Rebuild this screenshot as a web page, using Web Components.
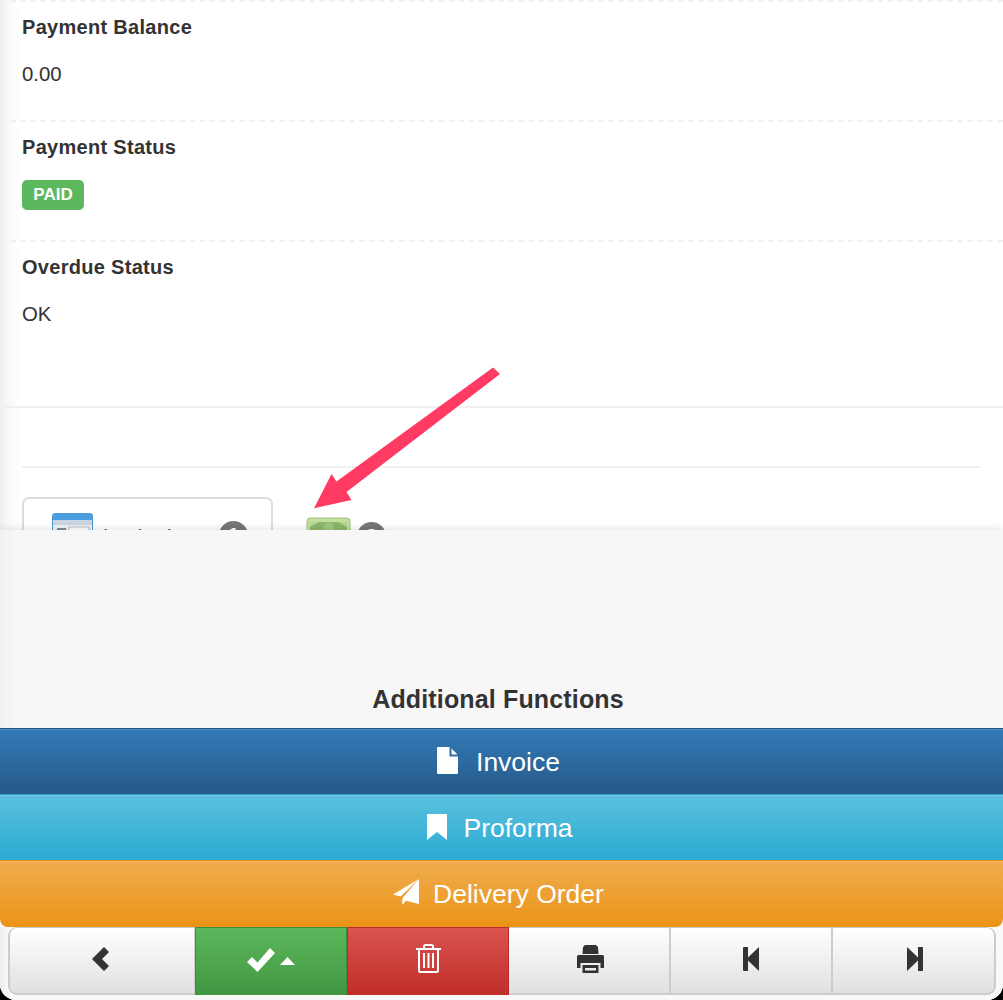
<!DOCTYPE html>
<html lang="en"><head><meta charset="utf-8"><title>Invoice</title>
<style>
html,body{margin:0;padding:0;background:#000;overflow:hidden}
body{font-family:"Liberation Sans",Arial,sans-serif;color:#333}
</style></head><body>
<app-shell>
  <info-row label="Payment Balance">0.00</info-row>
  <info-row label="Payment Status"><status-label>PAID</status-label></info-row>
  <info-row label="Overdue Status">OK</info-row>
  <tab-strip slot="tabs">
    <tab-item active count="1" label="Invoice Items">
      <svg slot="icon" width="41" height="44" viewBox="0 0 41 44"><rect x=".5" y=".5" width="40" height="42" rx="2" fill="#eef3f8" stroke="#4a97d2"/><rect x="1" y="1" width="39" height="6" fill="#4a9ede"/><rect x="1" y="7" width="39" height="5" fill="#c9d5e0"/><rect x="5" y="15" width="9" height="2" fill="#888"/><rect x="5" y="19" width="9" height="2" fill="#aaa"/><rect x="17" y="14" width="20" height="20" fill="#fff" stroke="#bbb"/></svg>
    </tab-item>
    <tab-item count="2">
      <svg slot="icon" width="45" height="40" viewBox="0 0 45 40"><rect x="1" y="1" width="43" height="38" rx="3" fill="#c3dfa0" stroke="#9cc07c"/><rect x="4" y="5" width="37" height="31" fill="#8db868"/><ellipse cx="22.500" cy="14" rx="6" ry="8" fill="#a0c67e"/><path d="M4 5h9L4 10ZM41 5h-9l9 5Z" fill="#b6d695"/></svg>
    </tab-item>
  </tab-strip>
  <bottom-panel slot="panel" heading="Additional Functions">
    <action-button tone="primary" label="Invoice" gap="18">
      <svg slot="icon" width="21" height="27" viewBox="0 0 21 27"><path fill="#fff" d="M1 0H12.500V9.500H21V26a1 1 0 0 1-1 1H1a1 1 0 0 1-1-1V1a1 1 0 0 1 1-1Z"/><path fill="#fff" d="M14.500 1.500 20.500 7.500H14.500Z"/></svg>
    </action-button>
    <action-button tone="info" label="Proforma" gap="17">
      <svg slot="icon" width="20" height="26" viewBox="0 0 20 26"><path fill="#fff" d="M0 0H20V26L10 18 0 26Z"/></svg>
    </action-button>
    <action-button tone="warning" label="Delivery Order" gap="14">
      <svg slot="icon" width="26" height="26" viewBox="0 0 26 26"><path fill="#fff" d="M26 0 0 15.500 7.500 17.500Z"/><path fill="#fff" d="M26 0 9.500 19 9 26 13 21.800 26 25Z"/></svg>
    </action-button>
    <tool-bar slot="toolbar">
      <tool-button style="width:187px;padding:0 4px 3px 0" tone="plain" first>
        <svg width="17" height="24" viewBox="0 0 17 24"><path fill="#333" d="M12 0 17 5 10 12 17 19 12 24 0 12Z"/></svg>
      </tool-button>
      <tool-button style="width:152px" tone="success">
        <svg width="28" height="24" viewBox="0 0 28 24"><path fill="#fff" d="M0 14 5 9 10.500 14.500 23 0 28 5 10.500 24Z"/></svg>
        <svg style="margin-left:5px;margin-top:2px" width="15" height="8" viewBox="0 0 15 8"><path fill="#fff" d="M7.500 0 15 8H0Z"/></svg>
      </tool-button>
      <tool-button style="width:162px;padding-bottom:7px" tone="danger">
        <svg width="25" height="29" viewBox="0 0 25 29"><path fill="none" stroke="#fff" stroke-width="2" d="M0 5H25M8 5V2.500Q8 1 9.500 1H15.500Q17 1 17 2.500V5M3 5.500V26.500Q3 28 4.500 28H20.500Q22 28 22 26.500V5.500M8 9V24M12.500 9V24M17 9V24"/></svg>
      </tool-button>
      <tool-button style="width:162px;padding-bottom:4px;padding-left:2px" tone="plain">
        <svg width="27" height="28" viewBox="0 0 27 28"><path fill="#333" fill-rule="evenodd" d="M8 0H19L21 2 21.500 9H5.500L6 2ZM1.500 10H25.500A1.500 1.500 0 0 1 27 11.500V23H23.500V18H3.500V23H0V11.500A1.500 1.500 0 0 1 1.500 10ZM5.500 20H21.500V28H5.500ZM8 23V25.500H19V23Z"/></svg>
      </tool-button>
      <tool-button style="width:162px;padding-bottom:3px" tone="plain">
        <svg width="16" height="24" viewBox="0 0 16 24"><path fill="#333" d="M1 0H5V10.500L16 0V24L5 13.500V24H1A1 1 0 0 1 0 23V1A1 1 0 0 1 1 0Z"/></svg>
      </tool-button>
      <tool-button style="flex:1;padding:0 0 3px 3px" tone="plain" final>
        <svg width="16" height="24" viewBox="0 0 16 24"><path fill="#333" d="M15 0H11V10.500L0 0V24L11 13.500V24H15A1 1 0 0 0 16 23V1A1 1 0 0 0 15 0Z"/></svg>
      </tool-button>
    </tool-bar>
  </bottom-panel>
  <svg slot="overlay" width="1003" height="1000" viewBox="0 0 1003 1000"><polygon fill="#ff3b63" points="493,367.500 500,374 346.500,492 351.500,500 314,508.300 331.500,474 336.500,481.500"/></svg>
</app-shell>
<script>
function def(name,css,html,init){
  customElements.define(name,class extends HTMLElement{
    constructor(){super();this.attachShadow({mode:'open'}).innerHTML='<style>'+css+'</style>'+html;}
    connectedCallback(){if(init)init(this,this.shadowRoot);}
  });
}
def('app-shell',`
  :host{display:block;width:1003px;height:1000px;position:relative;overflow:hidden;background:#000}
  .page{height:1000px;border-radius:0 0 16px 16px;overflow:hidden;display:flex;flex-direction:column;background:linear-gradient(to right,#eeeeee,#f6f6f6 6px,#fcfcfc 14px,#fff 22px)}
  .top{height:530px;overflow:hidden;flex:none}
  .hr1{height:2px;background:#f0f0f0;margin-top:46px}
  .hr2{height:2px;background:#f0f0f0;margin:58px 22px 0}
  .overlay{position:absolute;left:0;top:0;pointer-events:none}
  ::slotted(svg){display:block}
`,`<div class="page"><div class="top"><slot></slot><div class="hr1"></div><div class="hr2"></div><slot name="tabs"></slot></div><slot name="panel"></slot></div><div class="overlay"><slot name="overlay"></slot></div>`);
def('info-row',`
  :host{display:block;height:120px;box-sizing:border-box;border-top:2px dashed #f1f1f1;padding:15px 22px 0;font-size:20.4px;line-height:22px;color:#333}
  .l{font-size:20px;letter-spacing:.3px;font-weight:700;margin-bottom:25px;margin-top:-1px}
`,`<div class="l"></div><div><slot></slot></div>`,(h,s)=>{s.querySelector('.l').textContent=h.getAttribute('label')});
def('status-label',`
  :host{display:inline-flex;align-items:center;justify-content:center;width:62px;height:30px;margin-top:-3px;box-sizing:border-box;background:#5cb85c;color:#fff;border-radius:5px;font-weight:700;font-size:17px;vertical-align:top}
`,`<slot></slot>`);
def('tab-strip',`
  :host{display:flex;align-items:flex-start;padding:29px 22px 0}
`,`<slot></slot>`);
def('tab-item',`
  :host{display:flex;align-items:flex-start;box-sizing:border-box;font-size:18.500px;color:#333}
  :host([active]){width:251px;height:90px;border:2px solid #ddd;border-radius:7px;padding:14px 0 0 28px;margin-right:33px}
  :host(:not([active])){padding-top:20px}
  .t{margin:1px 9px 0 10px;line-height:44px;white-space:nowrap;width:107px}
  :host(:not([active])) .t{display:none}
  :host(:not([active])) .b{margin-left:6px;margin-top:5px}
  .b{width:29px;height:29px;margin-top:8px;border-radius:50%;background:#777;color:#fff;font-size:20px;font-weight:700;display:flex;align-items:center;justify-content:center;flex:none}
  ::slotted(svg){display:block;flex:none}
`,`<slot name="icon"></slot><span class="t"></span><span class="b"></span>`,(h,s)=>{s.querySelector('.t').textContent=h.getAttribute('label')||'';s.querySelector('.b').textContent=h.getAttribute('count')});
def('bottom-panel',`
  :host{display:flex;flex-direction:column;flex:1;min-height:0;position:relative;background:#f7f7f7;box-shadow:0 -2px 7px rgba(0,0,0,.1)}
  .head{height:198px;box-sizing:border-box;display:flex;align-items:flex-end;justify-content:center;padding:0 7px 14px 0;background:linear-gradient(to right,#f1f1f1,#f7f7f7 16px);font-size:25px;letter-spacing:.15px;line-height:30px;font-weight:700;color:#333}
  .foot{flex:1;background:linear-gradient(to right,#ededed,#f9f9f9 8px)}
`,`<div class="head"></div><slot></slot><div class="foot"><slot name="toolbar"></slot></div>`,(h,s)=>{s.querySelector('.head').textContent=h.getAttribute('heading')});
def('action-button',`
  :host{display:flex;align-items:center;justify-content:center;height:66px;box-sizing:border-box;color:#fff;font-size:26.500px;border-top:1px solid;box-shadow:inset 0 1px 0 rgba(255,255,255,.15);padding:2px 6px 0 0}
  :host([tone=primary]){background:linear-gradient(#337ab7,#265a88);border-color:#245580}
  :host([tone=info]){background:linear-gradient(#5bc0de,#2aabd2);border-color:#28a4c9;padding-right:4px}
  :host([tone=warning]){background:linear-gradient(#f0ad4e,#eb9316);border-color:#e38d13;height:67px;border-radius:0 0 8px 8px;padding-top:0}
  ::slotted(svg){display:block;flex:none}
  .i{display:flex;margin-top:-4px}
`,`<span class="i"><slot name="icon"></slot></span><span class="t"></span>`,(h,s)=>{s.querySelector('.t').textContent=h.getAttribute('label');s.querySelector('.i').style.marginRight=h.getAttribute('gap')+'px'});
def('tool-bar',`
  :host{display:flex;height:68px;margin:0 7px 0 8px;box-sizing:border-box}
`,`<slot></slot>`);
def('tool-button',`
  :host{display:flex;align-items:center;justify-content:center;box-sizing:border-box;flex:none;height:68px}
  :host([tone=plain]){background:linear-gradient(#fff,#e0e0e0);border:solid #ccc;border-width:1px 2px 2px 0}
  :host([first]){border-width:1px 1px 2px 2px!important;border-radius:9px 0 0 9px}
  :host([final]){border-width:1px 2px 2px 0!important;border-radius:0 9px 9px 0}
  :host([tone=success]){background:linear-gradient(#5cb85c,#419641);border:1px solid #3e8f3e;border-bottom:0;padding-bottom:3px}
  :host([tone=danger]){background:linear-gradient(#d9534f,#c12e2a);border:1px solid #b92c28;border-bottom:0}
  ::slotted(svg){display:block;flex:none}
`,`<slot></slot>`);
</script>
</body></html>
